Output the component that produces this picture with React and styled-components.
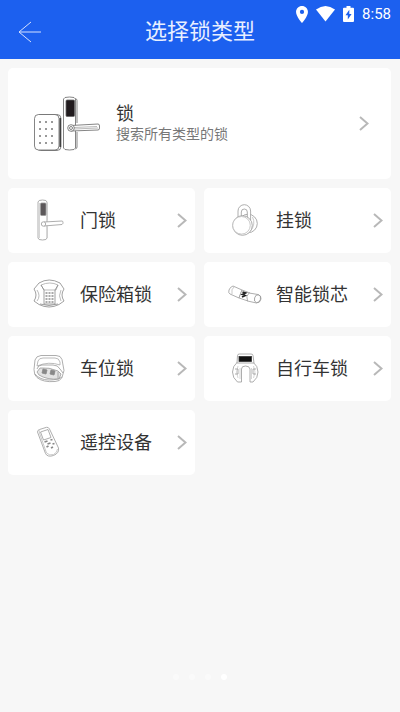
import React from "react";
import styled, { createGlobalStyle } from "styled-components";

const GlobalStyle = createGlobalStyle`
  * {
    box-sizing: border-box;
  }
  body {
    margin: 0;
    background: #f7f7f7;
    font-family: Roboto, "Noto Sans CJK SC", sans-serif;
  }
`;

const LockSetIcon = () => (
  <Drawing width="70" height="64" viewBox="0 0 70 64" $ink="#666">
    <rect x="4.5" y="22.5" width="24.5" height="36" rx="4" />
    <rect x="2.5" y="22.5" width="24.5" height="35.5" rx="4" fill="#fff" />
    <path d="M28.2 26v29" stroke="#333" strokeWidth="1.4" />
    <g fill="#999" stroke="none">
      {[29, 36, 43, 50].map((y) =>
        [7, 13, 19].map((x) => (
          <rect key={`${x}-${y}`} x={x} y={y} width="2" height="2" />
        ))
      )}
    </g>
    <path d="M31.5 7q0-2 6-2t6 2v49q0 2-6 2t-6-2z" fill="#fff" />
    <path d="M43.5 6.5q1.500.5 1.500 2V31M45 40v15q0 1.500-1.500 2" />
    <rect x="34" y="8" width="8.5" height="16.5" rx="1" fill="#211b1e" />
    <path d="M39 33.5 66 32q1.500 0 1.500 2v2q0 2-1.500 2L39 39z" fill="#fff" />
    <path d="M42 35.5 65 34.5M42 37 66 36" stroke="#aaa" />
    <circle cx="39" cy="36" r="3.3" fill="#fff" />
    <circle cx="39" cy="36" r="1.5" />
  </Drawing>
);

const DoorLockIcon = () => (
  <Drawing width="40" height="44" viewBox="0 0 40 44" $ink="#999">
    <path d="M10 3q0-2 4.500-2T19 3v36q0 2-4.500 2T10 39z" fill="#fff" />
    <path d="M11.5 4v35M19.5 4v17M19.5 28v11" stroke="#ccc" />
    <rect x="12.5" y="4" width="5.5" height="12.5" rx="1" fill="#5c585a" />
    <path d="m16 23 18-1q1 0 1 1.500t-1 2l-18 1.500z" fill="#fff" />
    <circle cx="15.5" cy="25" r="2.2" fill="#fff" />
  </Drawing>
);

const PadlockIcon = () => (
  <Drawing width="40" height="44" viewBox="0 0 40 44" $ink="#999">
    <circle cx="24" cy="24.5" r="9.3" fill="#fff" />
    <path d="M14 21V12a6.300 6.300 0 0 1 12.600 0v9h-3.300v-8a3 3 0 0 0-6 0v8z" fill="#fff" />
    <path d="M28.500 18q3.500 7-2 14" stroke="#bbb" />
    <circle cx="18.5" cy="26.5" r="9.8" fill="#fff" />
    <circle cx="17.5" cy="26.3" r="8.8" stroke="#bbb" fill="#fff" />
  </Drawing>
);

const SafeLockIcon = () => (
  <Drawing width="40" height="44" viewBox="0 0 40 44" $ink="#888">
    <path d="M11 10q10-6 21 0l4 6q-4 6 0 12l-5 3.500q-10 5-20 0l-5-3.500q4-6 0-12z" />
    <path d="M13 12q9-4 17 0l-2 5H16zM9 17q4 6 0 11M33 17q-3 6 0 11" stroke="#aaa" />
    <path d="m13 12 3 5v14h11V17l3-5M12 31q9 3 18 0" />
    <path d="M18.5 19v11M21.500 19v11M24.500 19v11" strokeWidth="2" strokeDasharray="2 1" stroke="#aaa" />
  </Drawing>
);

const CylinderIcon = () => (
  <Drawing width="40" height="44" viewBox="0 0 40 44" $ink="#999">
    <path d="m9 13 9 4-3 8-9-4q-2-1-1-4t4-4z" fill="#fff" />
    <path d="m18 17 8 3-2 8-9-3z" fill="#fff" />
    <path d="m25 20 9 1.500q3.500 1 3 4.500t-4.500 4l-9-2q-2-5 1.500-8z" fill="#fff" />
    <ellipse cx="33.5" cy="25.7" rx="3" ry="4" transform="rotate(15 33.5 25.7)" />
    <path d="M10 14q-3 2-2 7" stroke="#bbb" />
    <path d="m18.500 19 3 1-3 1.500 2.500 1-3 1.500" stroke="#222" strokeWidth="1.800" />
  </Drawing>
);

const ParkingLockIcon = () => (
  <Drawing width="40" height="44" viewBox="0 0 40 44" $ink="#999">
    <path d="M7 13q1-4 6-4.500l15 0q5 0 6 4l2 11-2 7q-2 4-7 4-12 1-18-4-3-2-3-8z" />
    <path d="M10 14q1-3 5-3l12 0q4 0 5 4v3q-11-4-23 1z" stroke="#aaa" />
    <path d="M9 22q1-4 5-4h11q5 0 7 4l3 4" />
    <path d="M9 25 12 21q9-1 18 3l3 3-2 5q-12 1-20-4z" fill="#e3e3e3" />
    <path d="m15 22 4 1-1 4-4-1zM23 23l4 1-1 4-4-1z" fill="#888" stroke="#888" />
    <path d="M7 27q5 6 14 6t13-3M30 25v6" />
  </Drawing>
);

const BikeLockIcon = () => (
  <Drawing width="40" height="44" viewBox="0 0 40 44" $ink="#999">
    <path d="M13.500 15q-5 4-5 10 0 6 5 10h4V22q0-3 4-3t4.500 3v13h3q5-4 5-10 0-6-5-10z" fill="#fff" />
    <path d="m13 16 .5-7.500q0-1.500 2-1.500h11.500q2 0 2 1.500l1 7.500z" fill="#fff" />
    <rect x="15" y="9.5" width="12.5" height="5" fill="#111" stroke="#333" />
    <path d="M14 19q-3 6 0 12M29.500 19q3 6 0 12M16 21v11M27.500 21v11" stroke="#ccc" />
    <path d="M11 22h3v5h-3M32 22h-3v5h3" stroke="#999" />
  </Drawing>
);

const RemoteIcon = () => (
  <Drawing width="40" height="44" viewBox="0 0 40 44" $ink="#999">
    <path d="M9.500 11q0-2 2-2.500l7-2.200q2-.3 3 1.700l9 19q1 5-5 7.500-6 2-8-2z" fill="#fff" />
    <path d="m12.500 11 7.500-2.500 3 8-7.500 2.500z" />
    <path d="m11 9 .5 3 7 20q3 3 7 1.500 4-2 4-5.500" stroke="#bbb" />
    <path d="m16.500 21 3-1M22.500 19l2-.5M19.500 23l3-1M18.500 26l2-1M24.500 23l2-.5M23 27l2-1" stroke="#888" strokeWidth="1.800" />
  </Drawing>
);

const Chevron = () => (
  <Arrow width="10" height="16" viewBox="0 0 10 16" aria-hidden="true">
    <path d="m1 1 7.500 6.500-7.500 6.500" fill="none" stroke="#b8b8b8" strokeWidth="2" />
  </Arrow>
);

const lockTypes = [
  { name: "门锁", Icon: DoorLockIcon },
  { name: "挂锁", Icon: PadlockIcon },
  { name: "保险箱锁", Icon: SafeLockIcon },
  { name: "智能锁芯", Icon: CylinderIcon },
  { name: "车位锁", Icon: ParkingLockIcon },
  { name: "自行车锁", Icon: BikeLockIcon },
  { name: "遥控设备", Icon: RemoteIcon },
];

const App = () => {
  return (
    <Page>
      <GlobalStyle />
      <Header>
        <StatusBar>
          <svg width="12" height="17" viewBox="5 2 14 20" fill="#fff">
            <path d="M12 2C8.130 2 5 5.130 5 9c0 5.250 7 13 7 13s7-7.750 7-13c0-3.870-3.130-7-7-7zm0 9.500a2.500 2.500 0 1 1 0-5 2.500 2.500 0 0 1 0 5z" />
          </svg>
          <svg width="19" height="16" viewBox="0 0 19 16" fill="#fff">
            <path d="M0 3.500Q9.500-3.500 19 3.500L9.500 15.500z" />
          </svg>
          <svg width="11" height="16" viewBox="0 0 11 16" fill="#fff">
            <path
              fillRule="evenodd"
              d="M3.500 0h4v1.700H10q1 0 1 1V15q0 1-1 1H1q-1 0-1-1V2.700q0-1 1-1h2.500zM6.300 3.800 2.500 9.300h2.300v4.200L8.600 8H6.300z"
            />
          </svg>
          <span>8:58</span>
        </StatusBar>
        <BackButton aria-label="返回">
          <svg width="24" height="22" viewBox="0 0 24 22">
            <path d="M13 1 1 11l12 10M1 11h22" fill="none" stroke="#d5e1ff" />
          </svg>
        </BackButton>
        <Title>选择锁类型</Title>
      </Header>
      <Content>
        <AllLocks>
          <LockSetIcon />
          <Labels>
            <Name>锁</Name>
            <Hint>搜索所有类型的锁</Hint>
          </Labels>
          <Chevron />
        </AllLocks>
        <Grid>
          {lockTypes.map(({ name, Icon }) => (
            <TypeCard key={name}>
              <Icon />
              <Name>{name}</Name>
              <Chevron />
            </TypeCard>
          ))}
        </Grid>
      </Content>
      <Dots>
        <Dot />
        <Dot />
        <Dot />
        <Dot $active />
      </Dots>
    </Page>
  );
};

const Page = styled.div`
  display: flex;
  flex-direction: column;
  min-height: 100vh;
`;

const Header = styled.header`
  position: relative;
  display: grid;
  grid-template-columns: 60px 1fr 60px;
  align-items: center;
  height: 59px;
  padding-top: 4px;
  background: #1c60ef;
`;

const StatusBar = styled.div`
  position: absolute;
  top: 4px;
  right: 9px;
  display: flex;
  align-items: center;
  gap: 8px;
  color: #fff;
  font-size: 15px;
  line-height: 20px;
`;

const BackButton = styled.button`
  display: flex;
  padding: 0 0 0 18px;
  border: none;
  background: none;
  cursor: pointer;
`;

const Title = styled.h1`
  margin: 0;
  color: #e8efff;
  font-size: 22px;
  font-weight: 400;
  line-height: 32px;
  text-align: center;
`;

const Content = styled.main`
  display: flex;
  flex-direction: column;
  gap: 9px;
  padding: 9px 9px 9px 8px;
`;

const Card = styled.button`
  display: flex;
  align-items: center;
  border: none;
  border-radius: 5px;
  background: #fff;
  font-family: inherit;
  text-align: left;
  cursor: pointer;
`;

const AllLocks = styled(Card)`
  gap: 14px;
  height: 111px;
  padding: 0 22px 0 24px;
`;

const Grid = styled.div`
  display: grid;
  grid-template-columns: 1fr 1fr;
  gap: 9px;
`;

const TypeCard = styled(Card)`
  gap: 12px;
  height: 65px;
  padding: 0 8px 0 20px;
`;

const Labels = styled.span`
  display: flex;
  flex-direction: column;
`;

const Name = styled.span`
  color: #333;
  font-size: 18px;
  line-height: 20px;
  white-space: nowrap;
`;

const Hint = styled.span`
  color: #777;
  font-size: 14px;
  line-height: 20px;
`;

const Drawing = styled.svg`
  flex: none;
  fill: none;
  stroke: ${(props) => props.$ink};
  stroke-width: 0.8;
`;

const Arrow = styled.svg`
  flex: none;
  margin-left: auto;
`;

const Dots = styled.div`
  display: flex;
  justify-content: center;
  gap: 10px;
  margin-top: auto;
  padding-bottom: 32px;
`;

const Dot = styled.span`
  width: 6px;
  height: 6px;
  border-radius: 50%;
  background: ${(props) => (props.$active ? "#fff" : "#fafafa")};
`;

export default App;
